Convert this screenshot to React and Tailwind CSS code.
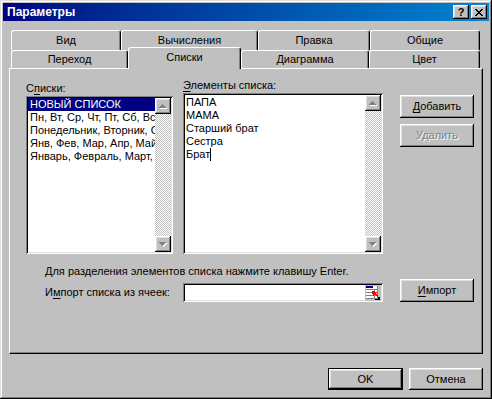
const raised =
  "bg-[#c0c0c0] shadow-[inset_-1px_-1px_#000,inset_1px_1px_#fff,inset_-2px_-2px_#808080,inset_2px_2px_#dfdfdf]";
const sunken =
  "bg-white shadow-[inset_1px_1px_#808080,inset_-1px_-1px_#fff,inset_2px_2px_#000,inset_-2px_-2px_#dfdfdf]";
const tabBase =
  "flex justify-center bg-[#c0c0c0] border-t border-l border-white border-r border-r-black rounded-t-[3px] shadow-[inset_-1px_0_#808080] leading-[13px] whitespace-nowrap";

function Arrow({ up }) {
  const rows = up
    ? [
        [3, 0, 1],
        [2, 1, 3],
        [1, 2, 5],
        [0, 3, 7],
      ]
    : [
        [0, 0, 7],
        [1, 1, 5],
        [2, 2, 3],
        [3, 3, 1],
      ];
  return (
    <div className={`w-[16px] h-[16px] shrink-0 flex items-center justify-center ${raised}`}>
      <svg width="8" height="5" viewBox="0 0 8 5" shapeRendering="crispEdges">
        {rows.map(([x, y, w], i) => (
          <rect key={"w" + i} x={x + 1} y={y + 1} width={w} height="1" fill="#fff" />
        ))}
        {rows.map(([x, y, w], i) => (
          <rect key={"g" + i} x={x} y={y} width={w} height="1" fill="#808080" />
        ))}
      </svg>
    </div>
  );
}

function ScrollBar() {
  return (
    <div className="w-[16px] h-full shrink-0 flex flex-col bg-[repeating-conic-gradient(#c0c0c0_0%_25%,#ffffff_0%_50%)] bg-size-[2px_2px]">
      <Arrow up />
      <div className="flex-1" />
      <Arrow />
    </div>
  );
}

function CloseGlyph() {
  const rows = [
    [0, 0, 2],
    [6, 0, 2],
    [1, 1, 2],
    [5, 1, 2],
    [2, 2, 4],
    [3, 3, 2],
    [2, 4, 4],
    [1, 5, 2],
    [5, 5, 2],
    [0, 6, 2],
    [6, 6, 2],
  ];
  return (
    <svg width="8" height="7" viewBox="0 0 8 7" shapeRendering="crispEdges">
      {rows.map(([x, y, w], i) => (
        <rect key={i} x={x} y={y} width={w} height="1" fill="#000" />
      ))}
    </svg>
  );
}

function RefIcon() {
  return (
    <svg width="16" height="16" viewBox="0 0 16 16" shapeRendering="crispEdges">
      <rect x="0" y="0" width="16" height="16" fill="#c0c0c0" />
      <rect x="1" y="1" width="12" height="13" fill="#fff" />
      <rect x="1" y="1" width="7" height="2" fill="#000080" />
      <rect x="1" y="4" width="12" height="1" fill="#808080" />
      <rect x="1" y="7" width="12" height="1" fill="#808080" />
      <rect x="1" y="10" width="12" height="1" fill="#808080" />
      <rect x="1" y="13" width="12" height="1" fill="#808080" />
      <rect x="12" y="1" width="1" height="13" fill="#808080" />
      <rect x="9" y="4" width="1" height="10" fill="#808080" />
      <polygon points="7,6 12,7 10.5,8.5 13,11 12,12 9.5,9.5 8,11" fill="#ff0000" />
      <rect x="13" y="12" width="2" height="3" fill="#000" />
      <rect x="10" y="14" width="5" height="1" fill="#000" />
    </svg>
  );
}

function U({ children }) {
  return <span className="underline underline-offset-[2px]">{children}</span>;
}

export default function App() {
  const leftItems = [
    "НОВЫЙ СПИСОК",
    "Пн, Вт, Ср, Чт, Пт, Сб, Вс",
    "Понедельник, Вторник, Среда, Четверг, Пятница, Суббота, Воскресенье",
    "Янв, Фев, Мар, Апр, Май, Июн, Июл, Авг, Сен, Окт, Ноя, Дек",
    "Январь, Февраль, Март, Апрель, Май, Июнь, Июль, Август",
  ];
  const rightItems = ["ПАПА", "МАМА", "Старший брат", "Сестра"];

  return (
    <div className="w-[492px] h-[399px] bg-[#c0c0c0] p-[3px] flex flex-col text-[11px] text-black font-['Liberation_Sans',Arial,sans-serif] shadow-[inset_-1px_-1px_#000,inset_1px_1px_#dfdfdf,inset_-2px_-2px_#808080,inset_2px_2px_#fff] select-none">
      {/* Title bar */}
      <div className="h-[18px] shrink-0 flex items-center bg-linear-to-r from-[#000080] to-[#1084d0] pl-[4px] pr-[2px]">
        <div className="flex-1 text-white font-bold text-[12px] leading-[14px]">Параметры</div>
        <div className="flex gap-[2px]">
          <div className={`w-[16px] h-[14px] flex items-center justify-center font-bold text-[11px] leading-[11px] pt-px ${raised}`}>
            ?
          </div>
          <div className={`w-[16px] h-[14px] flex items-center justify-center ${raised}`}>
            <CloseGlyph />
          </div>
        </div>
      </div>

      {/* Body */}
      <div className="flex-1 flex flex-col px-[6px] pt-[9px]">
        {/* Back tab row */}
        <div className="flex pl-[2px] h-[20px]">
          <div className={`${tabBase} w-[110px] h-[20px] pt-[3px]`}>Вид</div>
          <div className={`${tabBase} w-[137px] h-[20px] pt-[3px]`}>Вычисления</div>
          <div className={`${tabBase} w-[112px] h-[20px] pt-[3px]`}>Правка</div>
          <div className={`${tabBase} w-[110px] h-[20px] pt-[3px]`}>Общие</div>
        </div>
        {/* Front tab row */}
        <div className="relative z-10 flex items-end pl-[2px] h-[22px] -mt-[3px] -mb-px">
          <div className={`${tabBase} w-[117px] h-[18px] mb-px pt-[2px]`}>Переход</div>
          <div className={`${tabBase} w-[113px] h-[22px] pt-[3px]`}>Списки</div>
          <div className={`${tabBase} w-[128px] h-[18px] mb-px pt-[2px]`}>Диаграмма</div>
          <div className={`${tabBase} w-[111px] h-[18px] mb-px pt-[2px]`}>Цвет</div>
        </div>

        {/* Panel */}
        <div className="h-[286px] shrink-0 flex flex-col border border-white border-r-black border-b-black shadow-[inset_-1px_-1px_#808080]">
          <div className="flex pl-[16px]">
            {/* Left list */}
            <div className="w-[147px] pt-[13px] flex flex-col">
              <div className="h-[13px] leading-[13px] mb-px">
                С<U>п</U>иски:
              </div>
              <div className={`h-[158px] p-[2px] flex ${sunken}`}>
                <div className="flex-1 min-w-0 overflow-hidden flex flex-col">
                  {leftItems.map((t, i) => (
                    <div
                      key={i}
                      className={`h-[13px] leading-[13px] pl-[2px] whitespace-nowrap ${
                        i === 0 ? "bg-[#000080] text-white" : ""
                      }`}
                    >
                      {t}
                    </div>
                  ))}
                </div>
                <ScrollBar />
              </div>
            </div>

            {/* Right list */}
            <div className="w-[200px] ml-[10px] pt-[10px] flex flex-col">
              <div className="h-[13px] leading-[13px] mb-px">
                <U>Э</U>лементы списка:
              </div>
              <div className={`h-[161px] p-[2px] flex ${sunken}`}>
                <div className="flex-1 min-w-0 overflow-hidden flex flex-col pt-px pl-px">
                  {rightItems.map((t, i) => (
                    <div key={i} className="h-[13px] leading-[13px] whitespace-nowrap">
                      {t}
                    </div>
                  ))}
                  <div className="h-[13px] leading-[13px] whitespace-nowrap flex">
                    Брат<span className="inline-block w-px h-[13px] bg-black" />
                  </div>
                </div>
                <ScrollBar />
              </div>
            </div>

            {/* Buttons */}
            <div className="w-[74px] ml-[17px] pt-[26px] flex flex-col gap-[6px]">
              <div className={`h-[23px] ${raised}`}>
                <div className="h-full flex items-center justify-center">
                  <U>Д</U>обавить
                </div>
              </div>
              <div className={`h-[23px] flex items-center justify-center text-[#808080] [text-shadow:1px_1px_0_#fff] ${raised}`}>
                Удалить
              </div>
            </div>
          </div>

          <div className="pl-[35px] mt-[11px] h-[13px] leading-[13px] whitespace-nowrap">
            Для разделения элементов списка нажмите клавишу Enter.
          </div>

          <div className="flex items-end mt-px">
            <div className="w-[173px] pl-[35px] h-[19px] flex items-center whitespace-nowrap">
              И<U>м</U>порт списка из ячеек:
            </div>
            <div className={`w-[200px] h-[19px] p-[2px] flex justify-end items-center ${sunken}`}>
              <RefIcon />
            </div>
            <div className={`w-[74px] h-[23px] ml-[17px] flex items-center justify-center ${raised}`}>
              <span>
                <U>И</U>мпорт
              </span>
            </div>
          </div>
        </div>

        {/* Bottom buttons */}
        <div className="flex justify-end gap-[6px] mt-[14px]">
          <div className="w-[75px] h-[22px] border border-black">
            <div className={`w-full h-full flex items-center justify-center ${raised}`}>OK</div>
          </div>
          <div className={`w-[74px] h-[22px] flex items-center justify-center ${raised}`}>Отмена</div>
        </div>
      </div>
    </div>
  );
}
